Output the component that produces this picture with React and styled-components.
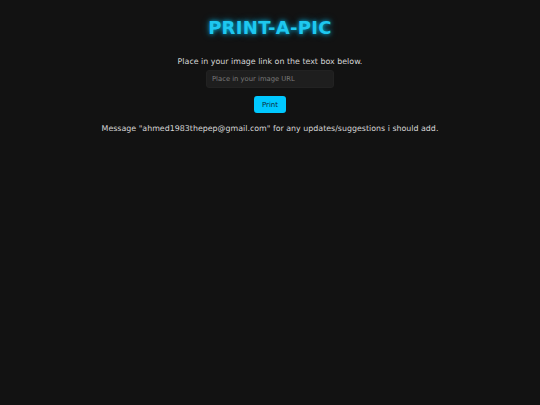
import React, { useState } from "react";
import styled, { createGlobalStyle } from "styled-components";

const GlobalStyle = createGlobalStyle`
  html, body {
    margin: 0;
    padding: 0;
    background-color: #121212;
  }
  body {
    font-family: "DejaVu Sans", Verdana, sans-serif;
    color: #d6d6d6;
  }
`;

const App = () => {
  const [url, setUrl] = useState("");

  return (
    <>
      <GlobalStyle />
      <Page>
        <Title>PRINT-A-PIC</Title>
        <Hint>Place in your image link on the text box below.</Hint>
        <UrlInput
          type="text"
          placeholder="Place in your image URL"
          value={url}
          onChange={(e) => setUrl(e.target.value)}
        />
        <PrintButton>Print</PrintButton>
        <Message>
          Message "ahmed1983thepep@gmail.com" for any updates/suggestions i
          should add.
        </Message>
      </Page>
    </>
  );
};

export default App;

const Page = styled.div`
  display: flex;
  flex-direction: column;
  align-items: center;
  min-height: 405px;
  padding-top: 17px;
  box-sizing: border-box;
`;

const Title = styled.h1`
  margin: 0;
  font-size: 18px;
  font-weight: bold;
  color: #1ec8f0;
  letter-spacing: 0.3px;
  text-shadow: 0 0 4px rgba(0, 200, 255, 0.8), 0 0 8px rgba(0, 200, 255, 0.4);
`;

const Hint = styled.p`
  margin: 19px 0 0;
  font-size: 7.9px;
  color: #d6d6d6;
`;

const UrlInput = styled.input`
  margin-top: 4px;
  width: 128px;
  height: 18px;
  box-sizing: border-box;
  padding: 0 5px;
  border: 1px solid #222;
  border-radius: 3px;
  background-color: #1e1e1e;
  color: #ccc;
  font-family: "DejaVu Sans", Verdana, sans-serif;
  font-size: 6.8px;
  outline: none;

  &::placeholder {
    color: #7a7a7a;
  }
`;

const PrintButton = styled.button`
  margin-top: 8px;
  width: 32px;
  height: 17px;
  padding: 0;
  border: none;
  border-radius: 3px;
  background-color: #00c8ff;
  color: #0a2a3a;
  font-family: "DejaVu Sans", Verdana, sans-serif;
  font-size: 7px;
  cursor: pointer;
`;

const Message = styled.p`
  margin: 11px 0 0;
  font-size: 7.9px;
  color: #d6d6d6;
`;
